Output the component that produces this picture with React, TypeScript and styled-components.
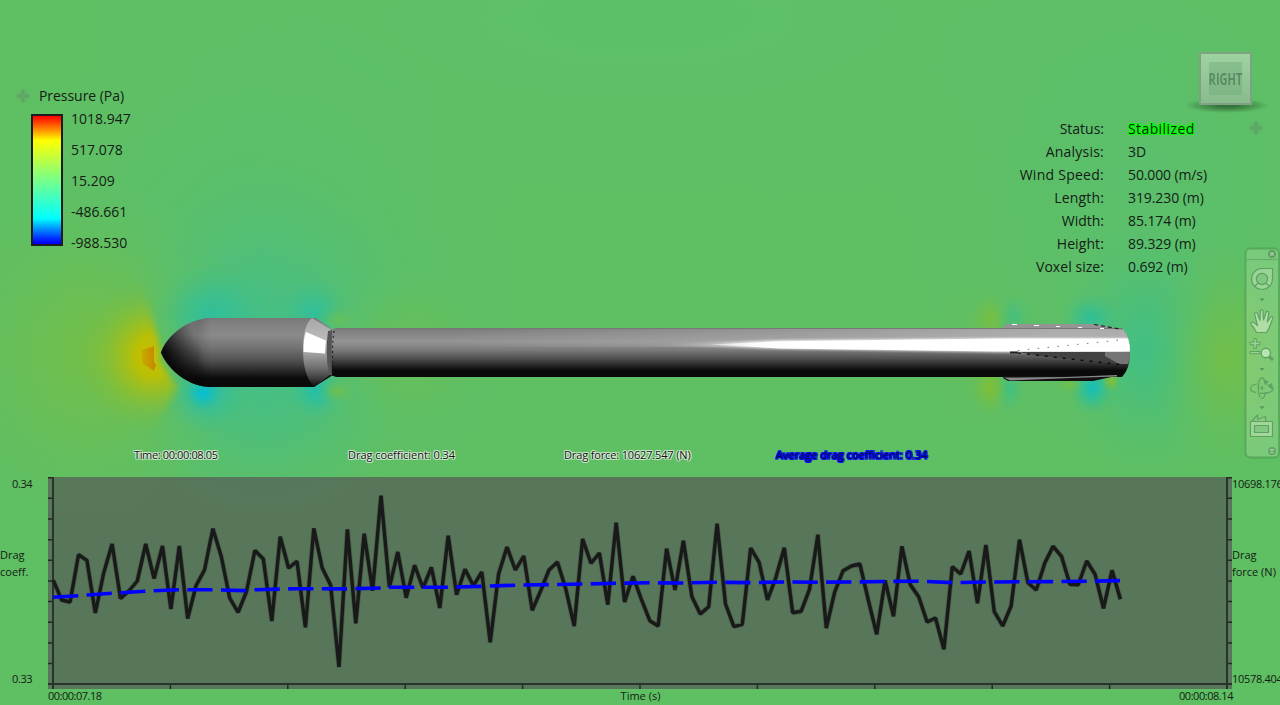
import React from "react";
import styled, { createGlobalStyle } from "styled-components";

const GlobalStyle = createGlobalStyle`
  body { margin: 0; overflow: hidden; background: #5fbf63; }
`;

const Screen = styled.main`
  position: relative;
  width: 1280px;
  height: 705px;
  overflow: hidden;
  display: flex;
  flex-direction: column;
  font-family: "Open Sans", "Noto Sans", sans-serif;
  color: #141c15;
`;

const FieldLayer = styled.svg`
  position: absolute;
  inset: 0;
`;

const Viewport = styled.section`
  position: relative;
  height: 447px;
  display: flex;
  justify-content: space-between;
  box-sizing: border-box;
`;

const Legend = styled.aside`
  padding: 86px 0 0 16px;
`;

const LegendHeader = styled.div`
  display: flex;
  align-items: center;
  gap: 9px;
  height: 20px;
`;

const Label = styled.span<{ $track?: number }>`
  font-size: 14px;
  line-height: 20px;
  white-space: nowrap;
  letter-spacing: ${(p) => p.$track ?? 0}px;
`;

const LegendBody = styled.div`
  display: flex;
  gap: 8px;
  padding: 8px 0 0 15px;
`;

const ColorBar = styled.div`
  box-sizing: border-box;
  width: 32px;
  height: 132px;
  border: 2px solid #1c1c1c;
  background: linear-gradient(#ff0000 0%, #ff5a00 7%, #ffff00 19%, #80ff80 48%, #00ffff 80%, #0000ff 99%);
`;

const Scale = styled.div`
  display: flex;
  flex-direction: column;
  gap: 11px;
  margin-top: -5px;
`;

const Info = styled.dl`
  display: grid;
  grid-template-columns: 104px auto;
  column-gap: 24px;
  grid-auto-rows: 23px;
  align-items: center;
  align-content: start;
  margin: 117px 0 0;
  width: 280px;
`;

const Term = styled.dt<{ $track: number }>`
  justify-self: end;
  font-size: 14px;
  line-height: 20px;
  white-space: nowrap;
  letter-spacing: ${(p) => p.$track}px;
`;

const Value = styled.dd<{ $track: number; $lit?: boolean }>`
  margin: 0;
  font-size: 14px;
  line-height: 20px;
  white-space: nowrap;
  letter-spacing: ${(p) => p.$track}px;
  text-shadow: ${(p) =>
    p.$lit ? "1px 0 #0f0, -1px 0 #0f0, 0 1px #0f0, 0 -1px #0f0, 1px 1px #0f0, -1px -1px #0f0, 1px -1px #0f0, -1px 1px #0f0" : "none"};
`;

const InfoHandle = styled.div`
  position: absolute;
  left: 1249px;
  top: 121px;
  line-height: 0;
`;

const ViewCube = styled.div`
  position: absolute;
  left: 1185px;
  top: 52px;
  width: 82px;
  height: 60px;
  display: flex;
  justify-content: center;
  align-items: flex-start;
`;

const CubeShadow = styled.div`
  position: absolute;
  left: 0;
  top: 46px;
  width: 84px;
  height: 15px;
  background: radial-gradient(closest-side, rgba(40, 90, 45, 0.75) 20%, rgba(50, 110, 55, 0.5) 60%, rgba(60, 130, 60, 0));
`;

const CubeFace = styled.div`
  position: relative;
  box-sizing: border-box;
  width: 53px;
  height: 53px;
  margin-left: -1px;
  border: 2px solid #80a184;
  background: linear-gradient(#9ed3a0, #89bb8d);
  display: flex;
  align-items: center;
  justify-content: center;
`;

const CubeInner = styled.div`
  flex: none;
  width: 33px;
  height: 33px;
  background: rgba(105, 165, 118, 0.38);
  display: flex;
  align-items: center;
  justify-content: center;
`;

const CubeText = styled.span`
  flex: none;
  font-weight: 700;
  font-size: 16px;
  line-height: 20px;
  color: #5a8c64;
  transform: scaleX(0.69);
`;

const NavBar = styled.nav`
  position: absolute;
  left: 1244px;
  top: 247px;
  width: 36px;
  height: 212px;
`;

const Readouts = styled.section`
  position: relative;
  height: 30px;
  padding-left: 134px;
  display: grid;
  grid-template-columns: 214px 216px 212px auto;
`;

const Readout = styled.span<{ $track: number; $accent?: boolean }>`
  font-size: 11px;
  line-height: 16px;
  white-space: nowrap;
  color: ${(p) => (p.$accent ? "#0a1040" : "#101410")};
  letter-spacing: ${(p) => p.$track}px;
  text-shadow: ${(p) => {
    const c = p.$accent ? "rgba(0,0,255,.8)" : "rgba(225,240,225,.6)";
    return `1px 0 ${c}, -1px 0 ${c}, 0 1px ${c}, 0 -1px ${c}, 1px 1px ${c}, -1px -1px ${c}, 1px -1px ${c}, -1px 1px ${c}`;
  }};
`;

const ChartPanel = styled.section`
  position: relative;
  display: grid;
  grid-template-columns: 48px 1184px 48px;
  grid-template-rows: 212px 16px;
`;

const AxisColumn = styled.div<{ $inset: number }>`
  display: flex;
  flex-direction: column;
  justify-content: space-between;
  margin-top: -1px;
  padding-bottom: 2px;
  > :first-child, > :last-child { margin-left: ${(p) => p.$inset}px; }
`;

const Small = styled.span<{ $track?: number }>`
  font-size: 11px;
  line-height: 16px;
  white-space: nowrap;
  letter-spacing: ${(p) => p.$track ?? 0}px;
`;

const AxisTitle = styled.div<{ $track: number }>`
  font-size: 11px;
  line-height: 17px;
  white-space: nowrap;
  letter-spacing: ${(p) => p.$track}px;
  margin: -35px 0 3px;
`;

const Plot = styled.svg`
  display: block;
`;

const TimeAxis = styled.div`
  grid-column: 1 / -1;
  display: grid;
  grid-template-columns: 1fr auto 1fr;
  padding: 0 47px 0 48px;
  margin-top: -1px;
  > :last-child { justify-self: end; }
`;

const MoveIcon = () => (
  <svg width="14" height="14" viewBox="0 0 14 14">
    <path
      d="M7 .5 9.500 3H8V6H11V4.500L13.500 7 11 9.500V8H8V11H9.500L7 13.500 4.500 11H6V8H3V9.500L.5 7 3 4.500V6H6V3H4.500Z"
      fill="#68a76e"
      stroke="#519a58"
      strokeOpacity=".75"
      strokeWidth=".7"
    />
  </svg>
);

type Blob = [cx: number, cy: number, rx: number, ry: number, color: string, opacity: number];

const blobs: Blob[] = [
  [262, 290, 260, 300, "#4abf85", 0.4],
  [1140, 180, 260, 300, "#50bf80", 0.3],
  [640, 20, 700, 220, "#5bc06c", 0.5],
  [95, 352, 150, 165, "#84bf35", 0.6],
  [265, 345, 150, 170, "#39bf94", 0.65],
  [265, 395, 120, 120, "#39bf94", 0.25],
  [400, 352, 90, 85, "#74bf48", 0.55],
  [1145, 350, 90, 130, "#2fbf98", 0.6],
  [1225, 358, 75, 110, "#80bf38", 0.6],
  [985, 352, 60, 80, "#70bf4c", 0.35],
  [210, 314, 60, 50, "#1fbfac", 0.65],
  [205, 392, 42, 42, "#10bfc4", 0.65],
  [203, 393, 18, 17, "#00bfd8", 0.9],
  [314, 312, 34, 36, "#1fbfac", 0.6],
  [316, 390, 28, 30, "#14bfba", 0.75],
  [338, 320, 22, 14, "#74bf48", 0.6],
  [337, 391, 20, 14, "#74bf48", 0.8],
  [1012, 318, 22, 26, "#2cbf9b", 0.5],
  [1008, 388, 18, 26, "#2cbf9b", 0.7],
  [991, 318, 22, 26, "#8abf28", 0.55],
  [991, 388, 22, 28, "#8abf28", 0.75],
  [1090, 318, 30, 26, "#22bfa6", 0.75],
  [1092, 388, 22, 27, "#10bfbd", 0.95],
  [1070, 384, 16, 12, "#7cbf3a", 0.6],
  [1111, 381, 10, 12, "#8abf28", 0.9],
];

const PressureField = () => (
  <FieldLayer width="1280" height="705" viewBox="0 0 1280 705">
    <defs>
      {blobs.map(([, , , , color, opacity], i) => (
        <radialGradient id={`blob${i}`} key={i}>
          <stop offset="0" stopColor={color} stopOpacity={opacity} />
          <stop offset=".35" stopColor={color} stopOpacity={opacity * 0.6} />
          <stop offset=".7" stopColor={color} stopOpacity={opacity * 0.18} />
          <stop offset="1" stopColor={color} stopOpacity="0" />
        </radialGradient>
      ))}
      <radialGradient id="stagnation">
        <stop offset="0" stopColor="#c8bf00" />
        <stop offset=".25" stopColor="#c0bf00" stopOpacity=".95" />
        <stop offset=".5" stopColor="#a8bf10" stopOpacity=".6" />
        <stop offset=".75" stopColor="#90bf28" stopOpacity=".25" />
        <stop offset="1" stopColor="#80bf38" stopOpacity="0" />
      </radialGradient>
      <filter id="feather" x="-20%" y="-20%" width="140%" height="140%"><feGaussianBlur stdDeviation="3" /></filter>
      <mask id="upstream" maskUnits="userSpaceOnUse" x="0" y="200" width="260" height="300">
        <path d="M0 200H110L145 290 157 336 160 350V362L178 388 150 440 120 500H0Z" fill="#fff" filter="url(#feather)" />
      </mask>
      <linearGradient id="orange">
        <stop offset="0" stopColor="#c8a800" />
        <stop offset="1" stopColor="#c87f00" />
      </linearGradient>
      <linearGradient id="body" x1="0" x2="0" y1="318" y2="387" gradientUnits="userSpaceOnUse">
        <stop offset="0" stopColor="#787878" />
        <stop offset=".1" stopColor="#828282" />
        <stop offset=".25" stopColor="#8a8a8a" />
        <stop offset=".42" stopColor="#747474" />
        <stop offset=".62" stopColor="#505050" />
        <stop offset=".78" stopColor="#242424" />
        <stop offset=".87" stopColor="#0b0b0b" />
        <stop offset="1" stopColor="#0a0a0a" />
      </linearGradient>
      <linearGradient id="noseShade" x1="166" x2="202" y1="366" y2="347" gradientUnits="userSpaceOnUse">
        <stop offset="0" stopColor="#080808" />
        <stop offset=".15" stopColor="#080808" stopOpacity=".95" />
        <stop offset=".55" stopColor="#080808" stopOpacity=".55" />
        <stop offset=".9" stopColor="#080808" stopOpacity=".22" />
        <stop offset="1.0" stopColor="#080808" stopOpacity=".14" />
      </linearGradient>
      <linearGradient id="noseEdge" x1="198" x2="210" y1="0" y2="0" gradientUnits="userSpaceOnUse">
        <stop offset="0" stopColor="#fff" />
        <stop offset="1" stopColor="#000" />
      </linearGradient>
      <mask id="noseMask" maskUnits="userSpaceOnUse" x="155" y="310" width="70" height="85">
        <rect x="155" y="310" width="70" height="85" fill="url(#noseEdge)" />
      </mask>
      <linearGradient id="flare" x1="0" x2="0" y1="318" y2="387" gradientUnits="userSpaceOnUse">
        <stop offset="0" stopColor="#a8a8a8" />
        <stop offset=".3" stopColor="#bababa" />
        <stop offset=".52" stopColor="#a0a0a0" />
        <stop offset=".72" stopColor="#707070" />
        <stop offset=".88" stopColor="#3c3c3c" />
        <stop offset="1" stopColor="#0a0a0a" />
      </linearGradient>
      <linearGradient id="tube" x1="0" x2="0" y1="328" y2="377" gradientUnits="userSpaceOnUse">
        <stop offset="0" stopColor="#767676" />
        <stop offset=".08" stopColor="#828282" />
        <stop offset=".28" stopColor="#949494" />
        <stop offset=".46" stopColor="#787878" />
        <stop offset=".62" stopColor="#505050" />
        <stop offset=".75" stopColor="#2b2b2b" />
        <stop offset=".86" stopColor="#0b0b0b" />
        <stop offset="1" stopColor="#0a0a0a" />
      </linearGradient>
      <linearGradient id="sheen" x1="450" x2="1050" y1="0" y2="0" gradientUnits="userSpaceOnUse">
        <stop offset="0" stopColor="#bbb" stopOpacity="0" />
        <stop offset="1" stopColor="#bbb" stopOpacity=".75" />
      </linearGradient>
      <linearGradient id="spec" x1="650" x2="790" y1="0" y2="0" gradientUnits="userSpaceOnUse">
        <stop offset="0" stopColor="#fff" stopOpacity="0" />
        <stop offset=".4" stopColor="#fff" stopOpacity=".35" />
        <stop offset=".75" stopColor="#fff" stopOpacity=".9" />
        <stop offset="1" stopColor="#fff" />
      </linearGradient>
      <filter id="soft" x="-5%" width="110%" y="-40%" height="180%"><feGaussianBlur stdDeviation="6 1.2" /></filter>
      <clipPath id="tubeClip"><path d="M332 329.500 336 328H1122Q1130 336 1130 352.500T1122 377H336L332 375.500Z" /></clipPath>
    </defs>

    <rect width="1280" height="705" fill="#5fbf63" />
    {blobs.map(([cx, cy, rx, ry], i) => (
      <ellipse key={i} cx={cx} cy={cy} rx={rx} ry={ry} fill={`url(#blob${i})`} />
    ))}
    <g mask="url(#upstream)">
      <ellipse cx="154" cy="356" rx="76" ry="80" fill="url(#stagnation)" />
    </g>
    <path d="M142 350 154 346V362L156 365 154 371 142 363Z" fill="url(#orange)" opacity=".9" />

    <path d="M161 352.500C164 342 180 321 208 318H316L333 330V375L314 387H208C184 385 166 366 161 352.500Z" fill="url(#body)" />
    <g mask="url(#noseMask)">
      <path d="M161 352.500C164 342 180 321 208 318H212V387H208C184 385 166 366 161 352.500Z" fill="url(#noseShade)" />
    </g>

    <path d="M312 318 331 329.500Q327 340 327 353T331 374L314 387Q303 375 303 350T312 318Z" fill="url(#flare)" />
    <path d="M306 332 326 340.500 325 353.500 303.500 352Q303 340 306 332Z" fill="#fff" />
    <path d="M328 331 333 330Q330 350 332 375L329 375Q325 352 328 331Z" fill="#555" />

    <g clipPath="url(#tubeClip)">
      <rect x="332" y="328" width="798" height="49" fill="url(#tube)" />
      <rect x="450" y="329" width="680" height="18" fill="url(#sheen)" />
      <path d="M640 345 780 340 1010 338H1130V352.500H1010L780 349Z" fill="url(#spec)" filter="url(#soft)" opacity=".75" />
      <path d="M710 344.500 780 341.300 1000 338.500H1130V351.500H1000L780 348.500Z" fill="url(#spec)" />
    </g>
    <path d="M334 331Q331 352 334 376" fill="none" stroke="#111" strokeWidth="1" strokeDasharray="2 3" />

    <path d="M1003 326.500 1007 324H1094L1116 328H1004Z" fill="#949494" />
    <path d="M1012 324.500H1017M1034 325.500H1039M1056 326.500H1060M1078 327.500H1082M1100 328.500H1104" stroke="#fff" strokeWidth="1" />
    <path d="M1094 324.500 1122 329.500" stroke="#222" strokeWidth="1.200" strokeDasharray="4 3" />
    <path d="M1003 378 1008 381H1093L1116 376H1004Z" fill="#111" />
    <path d="M1004 377.500 1066 377 1117 375V376.500L1070 378 1010 380.500Z" fill="#888" />
    <path d="M1018 352H1105V356L1120 364 1040 356Z" fill="#414141" />
    <path d="M1105 352H1130Q1130 359 1128 364H1119L1105 356Z" fill="#757575" />
    <path d="M1010 352.500H1018" stroke="#222" strokeWidth="2" />
    <path d="M1018 353 1120 364.500" stroke="#050505" strokeWidth="1.200" strokeDasharray="3 6" />
    <path d="M1018 350.500 1120 340" stroke="#777" strokeWidth="1" strokeDasharray="1.500 8.400" />
  </FieldLayer>
);

const NavIcons = () => (
  <svg width="36" height="212" viewBox="0 0 36 212" fill="none" stroke="#5da262" strokeWidth="1.200" strokeLinejoin="round">
    <rect x="1.500" y="1.500" width="33.500" height="209" rx="5" fill="#b4e0a8" fillOpacity=".34" stroke="#4f9f55" strokeOpacity=".75" strokeWidth="1.800" />
    <path d="M2.500 12.500H33.500" strokeOpacity=".7" />
    <circle cx="28" cy="7" r="4" fill="#5f9f64" stroke="none" />
    <path d="M26.300 5.300 29.700 8.700M29.700 5.300 26.300 8.700" stroke="#a9d9a6" />
    <path d="M18 21.500H28.500V32A10.500 10.500 0 1 1 18 21.500Z" fill="#a5d89d" fillOpacity=".75" />
    <circle cx="18" cy="32" r="5.600" fill="#82c780" />
    <path d="M14 36 10.500 39.500M22 36 25.500 39.500" />
    <g fill="#569c5b" stroke="none">
      <path d="M15.300 51.300H20.700L18 54.300ZM15.300 121.100H20.700L18 124.100ZM15.300 159.300H20.700L18 162.300Z" />
    </g>
    <path
      d="M12.500 85.500C10.800 81.500 9.400 79.500 7 77.500 6.200 75.500 8.500 74.500 10.200 75.800L13.500 78.500 10.700 67.500C10.200 65.200 12.800 64.500 13.500 66.700L16 73.500 16.200 64.500C16.300 62.400 18.800 62.400 19 64.500L19.500 73 22 65.500C22.700 63.600 25 64.300 24.700 66.300L23.300 75 26.200 70.500C27.400 68.900 29.300 69.900 28.500 71.800L25.500 80C24.500 83.500 23.300 83.500 22.500 85.500Z"
      fill="#aedda5"
    />
    <path d="M9.800 91.500H12.300V95.200H16V97.700H12.300V101.500H9.800V97.700H6V95.200H9.800ZM6 104.500H16V106.700H6Z" fill="#9bd393" strokeWidth="1" />
    <path d="M25 109.500 29 113" strokeWidth="3" />
    <circle cx="21.800" cy="106" r="4.700" fill="#b9e4af" strokeWidth="1.400" />
    <path d="M16.500 150.500C13.500 147 13.500 134 17 131 19 129.700 21 132.500 21.500 137M21.500 145C21 149.500 19 152.500 17.500 151" />
    <path d="M13 137C5 138 4.500 144.500 12 145.500M16 146.200C26 147.500 32 143 27.500 139" />
    <path d="M18 138.500V143.500M15.500 141H20.500" />
    <path d="M19.800 133.500 24.500 134.500 21.500 138ZM23.500 138.500 28 136.500 27.500 142Z" fill="#5da262" strokeWidth=".6" />
    <path d="M8 174 13.500 168V172.500L21.500 169.500V174" fill="#8ccb85" />
    <rect x="6.500" y="174.500" width="22" height="15" fill="#a3d79a" />
    <rect x="10.500" y="178.500" width="14" height="7" fill="#84c882" />
    <circle cx="28" cy="204" r="4" fill="#62a467" stroke="none" />
    <path d="M25.800 202.800H30.200M26.600 205.300H29.400" stroke="#a9d9a6" />
  </svg>
);

const samples = [
  580.3, 600, 602, 554.7, 560.3, 613, 573, 544, 598.5, 591, 581, 544, 578.5, 546, 609, 546, 618.5, 585.5, 570, 528.7,
  556.5, 598, 612.3, 591.5, 550.5, 559, 621, 536.7, 568, 561.3, 627.3, 528.3, 568, 585, 667, 529.3, 623.3, 533.7, 590.7,
  495.7, 587.3, 552, 597.7, 565.3, 588, 567.3, 608, 535.7, 594.7, 569.3, 585.7, 572, 642.3, 574, 547, 570, 556, 610.3,
  591, 570, 562, 589, 626, 539, 563.3, 553, 604.7, 522.7, 602, 576.3, 599.3, 620.7, 626, 548.7, 590, 540.7, 596.7, 614,
  606.7, 523.7, 604, 626.7, 624.3, 548, 562.3, 600, 577.3, 547.7, 612.7, 611.3, 589.3, 534.7, 628, 592, 570.7, 566, 564,
  600, 634.3, 580.3, 616.3, 546.3, 584.7, 596.7, 622, 618, 649.3, 566.7, 574, 551, 603.3, 545, 611.7, 626, 606, 539.7,
  582.7, 590, 563.3, 546.3, 556.3, 584.3, 584.7, 561, 574.3, 608.3, 570.3, 599.3,
];

const average: [number, number][] = [
  [53, 597.2], [78, 595.7], [87, 595], [112, 593.3], [121, 592.7], [145, 591.3], [154, 590.8], [179, 589.8], [213, 589.8],
  [244, 590.6], [256, 589.7], [297, 588.7], [346, 588.9], [381, 588], [390, 587.3], [448, 587.3], [480, 586.4], [515, 585.2],
  [549, 584.6], [583, 584], [615, 583.3], [649, 582.8], [683, 583], [717, 582.3], [750, 582.6], [784, 582], [818, 582.2],
  [850, 582], [885, 581.5], [918, 581.2], [952, 582.6], [986, 582], [1020, 581.8], [1053, 581.6], [1087, 581.3], [1120, 580.6],
];

const linePoints = samples.map((y, i) => `${(5.3 + i * 8.402).toFixed(1)},${(y - 477).toFixed(1)}`).join(" ");
const averagePoints = average.map(([x, y]) => `${x - 48},${(y - 477).toFixed(1)}`).join(" ");
const steps = Array.from({ length: 11 }, (_, i) => i);

const DragPlot = () => (
  <Plot width="1184" height="212" viewBox="0 0 1184 212">
    <rect width="1184" height="212" fill="#555555" fillOpacity=".68" />
    <g stroke="#232a24" strokeWidth="1.500">
      {steps.map((i) => (
        <path key={i} d={`M0 ${0.7 + i * 20.65}H5M1179 ${0.7 + i * 20.65}H1184M${5 + i * 117.4} 207V212`} />
      ))}
    </g>
    <path d="M5 0V212M1179 0V212M0 207H1184" stroke="#2a332b" strokeWidth="2" />
    <polyline points={linePoints} fill="none" stroke="#2a352b" strokeOpacity=".35" strokeWidth="5" strokeLinejoin="bevel" />
    <polyline points={linePoints} fill="none" stroke="#191919" strokeWidth="3.400" strokeLinejoin="bevel" />
    <polyline points={averagePoints} fill="none" stroke="#0000ff" strokeWidth="3.600" strokeDasharray="25.300 8.330" />
  </Plot>
);

const scale = ["1018.947", "517.078", "15.209", "-486.661", "-988.530"];

const facts: { term: string; value: string; a: number; b: number; lit?: boolean }[] = [
  { term: "Status:", value: "Stabilized", a: 0, b: 0.4, lit: true },
  { term: "Analysis:", value: "3D", a: 0.22, b: 0 },
  { term: "Wind Speed:", value: "50.000 (m/s)", a: 0.26, b: -0.12 },
  { term: "Length:", value: "319.230 (m)", a: 0.15, b: -0.08 },
  { term: "Width:", value: "85.174 (m)", a: 0, b: -0.1 },
  { term: "Height:", value: "89.329 (m)", a: 0.1, b: -0.1 },
  { term: "Voxel size:", value: "0.692 (m)", a: 0.05, b: -0.1 },
];

export default function App() {
  return (
    <Screen>
      <GlobalStyle />
      <PressureField />
      <Viewport>
        <Legend>
          <LegendHeader>
            <MoveIcon />
            <Label $track={-0.05}>Pressure (Pa)</Label>
          </LegendHeader>
          <LegendBody>
            <ColorBar />
            <Scale>
              {scale.map((text) => (
                <Label key={text}>{text}</Label>
              ))}
            </Scale>
          </LegendBody>
        </Legend>
        <Info>
          {facts.map((f) => (
            <React.Fragment key={f.term}>
              <Term $track={f.a}>{f.term}</Term>
              <Value $track={f.b} $lit={f.lit}>{f.value}</Value>
            </React.Fragment>
          ))}
        </Info>
        <InfoHandle><MoveIcon /></InfoHandle>
        <ViewCube>
          <CubeShadow />
          <CubeFace><CubeInner><CubeText>RIGHT</CubeText></CubeInner></CubeFace>
        </ViewCube>
        <NavBar><NavIcons /></NavBar>
      </Viewport>
      <Readouts>
        <Readout $track={-0.37}>Time: 00:00:08.05</Readout>
        <Readout $track={-0.05}>Drag coefficient: 0.34</Readout>
        <Readout $track={-0.15}>Drag force: 10627.547 (N)</Readout>
        <Readout $track={0.02} $accent>Average drag coefficient: 0.34</Readout>
      </Readouts>
      <ChartPanel>
        <AxisColumn $inset={12}>
          <Small $track={-0.4}>0.34</Small>
          <AxisTitle $track={0}>Drag<br />coeff.</AxisTitle>
          <Small $track={-0.4}>0.33</Small>
        </AxisColumn>
        <DragPlot />
        <AxisColumn $inset={0}>
          <Small $track={-0.3}>10698.176</Small>
          <AxisTitle $track={0}>Drag<br />force (N)</AxisTitle>
          <Small $track={-0.3}>10578.404</Small>
        </AxisColumn>
        <TimeAxis>
          <Small $track={-0.5}>00:00:07.18</Small>
          <Small>Time (s)</Small>
          <Small $track={-0.45}>00:00:08.14</Small>
        </TimeAxis>
      </ChartPanel>
    </Screen>
  );
}
